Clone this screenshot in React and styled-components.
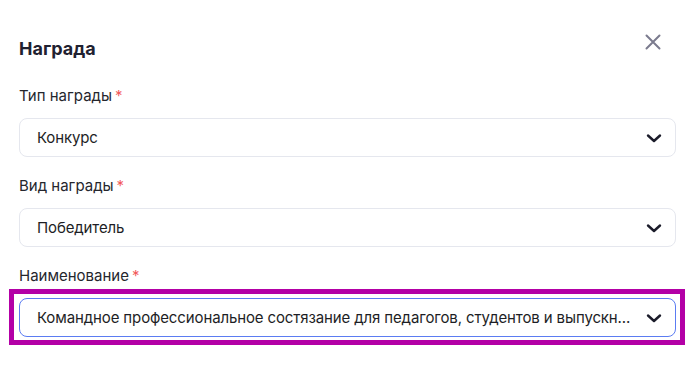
import React from "react";
import styled, { createGlobalStyle } from "styled-components";

const GlobalStyle = createGlobalStyle`
  body {
    margin: 0;
    background: #fff;
    font-family: Inter, "Noto Sans", sans-serif;
  }
`;

const Modal = styled.div`
  width: 692px;
  height: 386px;
  box-sizing: border-box;
  padding: 37px 16px 0 19px;
  background: #fff;
`;

const Header = styled.div`
  display: flex;
  justify-content: space-between;
  align-items: flex-start;
  margin-bottom: 25px;
`;

const Title = styled.h2`
  margin: 0;
  font-size: 18px;
  line-height: 24px;
  font-weight: 700;
  color: #1f2130;
`;

const CloseButton = styled.button`
  width: 24px;
  height: 24px;
  margin: -7px 11px 0 0;
  padding: 0;
  border: none;
  background: none;
  display: flex;
  align-items: center;
  justify-content: center;
  color: #7b7b8e;
  cursor: pointer;
`;

const Field = styled.div`
  position: relative;
  margin-bottom: 19px;
`;

const Label = styled.div`
  font-size: 15px;
  line-height: 20px;
  color: #25262d;
  margin-bottom: 12px;
`;

const Required = styled.span`
  color: #f25a5a;
  margin-left: 3px;
`;

const Select = styled.div`
  position: relative;
  height: 39px;
  box-sizing: border-box;
  display: flex;
  align-items: center;
  gap: 10px;
  padding: 0 13px 0 17px;
  border: 1px solid ${(p) => (p.focused ? "#5b7cf2" : "#e5e7ee")};
  border-radius: 8px;
  background: #fff;
`;

const Value = styled.span`
  flex: 1;
  min-width: 0;
  font-size: 15px;
  letter-spacing: -0.12px;
  color: #1d1e25;
  white-space: nowrap;
  overflow: hidden;
  text-overflow: ellipsis;
`;

const Chevron = styled.svg`
  flex-shrink: 0;
  color: #1b1c2a;
`;

const Highlight = styled.div`
  position: absolute;
  top: 23px;
  left: -10px;
  right: -9px;
  bottom: -8px;
  border: 5px solid #b300a6;
  pointer-events: none;
`;

const ChevronIcon = () => (
  <Chevron width="16" height="16" viewBox="0 0 16 16" fill="none">
    <path
      d="M2 5.5 L8 11 L14 5.5"
      stroke="currentColor"
      strokeWidth="2.4"
      strokeLinecap="round"
      strokeLinejoin="round"
    />
  </Chevron>
);

const fields = [
  { label: "Тип награды", value: "Конкурс" },
  { label: "Вид награды", value: "Победитель" },
  {
    label: "Наименование",
    value:
      "Командное профессиональное состязание для педагогов, студентов и выпускн...",
    focused: true,
  },
];

export default function App() {
  return (
    <>
      <GlobalStyle />
      <Modal>
        <Header>
          <Title>Награда</Title>
          <CloseButton aria-label="Закрыть">
            <svg width="16" height="16" viewBox="0 0 16 16" fill="none">
              <path
                d="M1.5 1.5 L14.5 14.5 M14.5 1.5 L1.5 14.5"
                stroke="currentColor"
                strokeWidth="2"
                strokeLinecap="round"
              />
            </svg>
          </CloseButton>
        </Header>
        {fields.map((f) => (
          <Field key={f.label}>
            <Label>
              {f.label}
              <Required>*</Required>
            </Label>
            <Select focused={f.focused}>
              <Value>{f.value}</Value>
              <ChevronIcon />
            </Select>
            {f.focused && <Highlight />}
          </Field>
        ))}
      </Modal>
    </>
  );
}
